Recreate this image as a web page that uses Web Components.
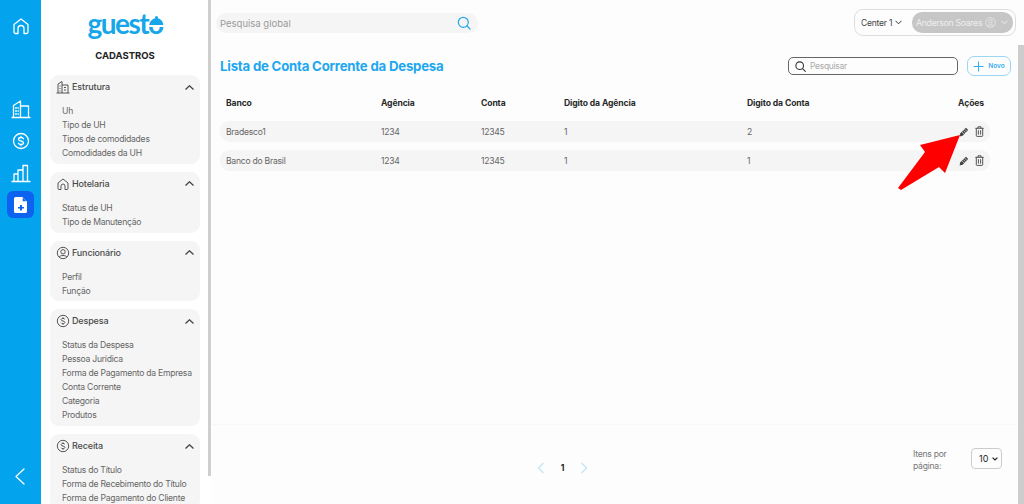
<!DOCTYPE html>
<html lang="pt-BR">
<head>
<meta charset="utf-8">
<title>Lista de Conta Corrente da Despesa</title>
<style>
  html, body { margin: 0; height: 100%; overflow: hidden; background: #fdfdfd; }
  body { font-family: Inter, "Open Sans", sans-serif; display: flex; }
</style>
</head>
<body>
<template id="tpl-rail">
  <style>
    :host { display: flex; flex-direction: column; align-items: center; width: 41px; height: 504px; background: #03a3ee; flex: none; }
    svg { display: block; fill: none; stroke: #fff; stroke-width: 1.3; stroke-linecap: round; stroke-linejoin: round; }
    .home { margin-top: 16px; }
    .b1 { margin-top: 63px; }
    .b2 { margin-top: 12px; }
    .b3 { margin-top: 12px; }
    .active { margin-top: 8px; width: 27px; height: 27px; border-radius: 6px; background: #0d62f0; display: flex; align-items: center; justify-content: center; }
    .back { margin-top: auto; margin-bottom: 19px; }
  </style>
  <svg class="home" width="20" height="20" viewBox="0 0 20 20"><path d="M3 8.500 10 3l7 5.500V16a1.500 1.500 0 0 1-1.500 1.500H13V12.500a3 3 0 0 0-6 0V17.500H4.500A1.500 1.500 0 0 1 3 16Z"/></svg>
  <svg class="b1" width="20" height="20" viewBox="0 0 20 20"><path d="M1 18.500h18M2.500 18.500V6.500L9.500 2v16.500M9.500 7h8v11.500M4.500 9h1M7 9h.5M4.500 12h1M7 12h.5M4.500 15h1M7 15h.5"/></svg>
  <svg class="b2" width="20" height="20" viewBox="0 0 20 20"><circle cx="10" cy="10" r="7.500"/><path d="M12.500 7.800c-.4-.9-1.300-1.300-2.500-1.300-1.500 0-2.500.7-2.500 1.700 0 2.400 5 1.200 5 3.600 0 1-1 1.700-2.500 1.700-1.300 0-2.200-.5-2.500-1.300M10 5.300v1.200M10 13.500v1.200"/></svg>
  <svg class="b3" width="20" height="20" viewBox="0 0 20 20"><path d="M1 18.500h18M3 18.500V11h4v7.500M7 18.500V7h5v11.500M12 18.500V2.500h4.500v16"/></svg>
  <div class="active">
    <svg width="16" height="18" viewBox="0 0 16 18" style="stroke:none"><path fill="#fff" d="M2.500 1H9.500L14 5.500V15.500A1.500 1.500 0 0 1 12.500 17H2.500A1.500 1.500 0 0 1 1 15.500V2.500A1.500 1.500 0 0 1 2.500 1Z"/><path fill="#0d62f0" d="M9.700 1.500 13.500 5.300H9.700ZM7 9h2v2h2v1.600H9v2H7v-2H5V11h2Z"/></svg>
  </div>
  <svg class="back" width="16" height="17" viewBox="0 0 16 17"><path d="M11 1 3 8.500l8 7.500"/></svg>
</template>

<template id="tpl-logo">
  <style>
    :host { display: block; text-align: center; }
    .wrap { position: relative; display: inline-block; height: 30px; font: 700 28px/30px Lato, Inter, sans-serif; color: #17a6ea; letter-spacing: -1.500px; }
    .cut { position: absolute; right: -2px; top: 17px; width: 17px; height: 1.500px; background: #fff; }
    .dot { position: absolute; right: 5px; top: 8px; width: 3px; height: 3px; border-radius: 50%; background: #17a6ea; }
    .fill { position: absolute; right: 0; top: 10px; width: 13px; height: 7px; border-radius: 7px 7px 0 0; background: #17a6ea; }
    h1 { margin: 11px 0 0; font: 700 9.500px/14px Inter, sans-serif; color: #222; }
  </style>
  <div class="wrap">guesto<span class="dot"></span><span class="fill"></span><span class="cut"></span></div>
  <h1>CADASTROS</h1>
</template>

<template id="tpl-menu-card">
  <style>
    :host { display: block; background: #f5f5f5; border-radius: 9px; padding: 4px 6px 3.800px 6px; margin-bottom: 8px; color: #555; }
    .head { display: flex; align-items: center; height: 16px; padding-bottom: 9px; }
    .ic { width: 14px; height: 14px; margin-right: 2px; display: flex; }
    .t { font: 500 9px/14px Inter, sans-serif; letter-spacing: -.15px; color: #4a4a4a; flex: 1; }
    .chev { width: 9px; height: 5px; fill: none; stroke: #444; stroke-width: 1.300; }
    .list { padding-left: 6px; font: 400 8.600px/14px Inter, sans-serif; letter-spacing: -.25px; color: #666; }
  </style>
  <div class="head"><span class="ic"><slot name="icon"></slot></span><span class="t"><slot name="title"></slot></span>
    <svg class="chev" viewBox="0 0 9 5"><path d="M.5 4.500 4.500.8l4 3.700"/></svg></div>
  <div class="list"><slot></slot></div>
</template>

<template id="tpl-topbar">
  <style>
    :host { display: flex; align-items: flex-start; justify-content: space-between; padding: 9px 8px 0 4px; height: 36px; }
    .search { margin-top: 4px; width: 262px; height: 20px; border-radius: 10px; background: #f5f5f5; display: flex; align-items: center; justify-content: space-between; padding: 0 7px 0 4px; box-sizing: border-box; font: 400 9.500px Inter, sans-serif; color: #9a9a9a; }
    .user { width: 162px; height: 27px; box-sizing: border-box; border: 1px solid #ddd; border-radius: 9px; display: flex; align-items: center; padding: 0 2px 0 6px; justify-content: space-between; font: 400 8.500px Inter, sans-serif; letter-spacing: -.2px; color: #444; }
    .pill { width: 101px; height: 21px; border-radius: 10px; background: #c6c6c6; color: #eee; display: flex; align-items: center; gap: 3px; padding-left: 4px; box-sizing: border-box; white-space: nowrap; font-size: 8.700px; letter-spacing: -.3px; }
    .c { display: flex; align-items: center; gap: 3px; }
  </style>
  <div class="search">Pesquisa global
    <svg width="14" height="14" viewBox="0 0 14 14" fill="none" stroke="#2aa7ea" stroke-width="1.200" stroke-linecap="round"><circle cx="6.300" cy="6.300" r="5"/><path d="m10 10 3 3"/></svg>
  </div>
  <div class="user">
    <span class="c">Center 1 <svg width="7" height="5" viewBox="0 0 7 5" fill="none" stroke="#333"><path d="m.5.8 3 3 3-3"/></svg></span>
    <span class="pill">Anderson Soares
      <svg width="11" height="11" viewBox="0 0 11 11" fill="none" stroke="#eee" stroke-width=".8"><circle cx="5.500" cy="5.500" r="4.800"/><circle cx="5.500" cy="4.500" r="1.700"/><path d="M2.500 9c.7-1.500 5.300-1.500 6 0"/></svg>
      <svg width="7" height="5" viewBox="0 0 7 5" fill="none" stroke="#eee" style="margin-left:2px"><path d="m.5.8 3 3 3-3"/></svg>
    </span>
  </div>
</template>

<template id="tpl-toolbar">
  <style>
    :host { display: flex; align-items: center; padding: 11px 13px 0 8px; height: 20px; }
    h2 { margin: 0; flex: 1; font: 700 13.200px/20px Inter, sans-serif; letter-spacing: -.2px; color: #1ea7f0; }
    .find { width: 170px; height: 18px; box-sizing: border-box; border: 1px solid #666; border-radius: 5px; display: flex; align-items: center; gap: 4px; padding-left: 6px; font: 400 8.500px Inter, sans-serif; letter-spacing: -.3px; color: #aaa; }
    .new { margin-left: 9px; width: 44px; height: 20px; box-sizing: border-box; border: 1px solid #9bd6f5; border-radius: 7px; display: flex; align-items: center; justify-content: center; gap: 4px; font: 600 6.500px Inter, sans-serif; color: #35aef0; }
  </style>
  <h2>Lista de Conta Corrente da Despesa</h2>
  <div class="find"><svg width="11" height="11" viewBox="0 0 11 11" fill="none" stroke="#333" stroke-width="1.100" stroke-linecap="round"><circle cx="4.700" cy="4.700" r="3.800"/><path d="m7.600 7.600 2.700 2.700"/></svg>Pesquisar</div>
  <div class="new"><svg width="11" height="11" viewBox="0 0 11 11" stroke="#35aef0" stroke-width="1"><path d="M5.500.5v10M.5 5.500h10"/></svg>Novo</div>
</template>

<template id="tpl-conta-table">
  <style>
    :host { display: block; padding: 17px 34px 0 8px; font-family: Inter, sans-serif; }
    .r { display: grid; grid-template-columns: 155px 100px 83px 183px 1fr 60px; padding: 0 6px; align-items: center; font-size: 8.600px; letter-spacing: -.25px; }
    .h { height: 20px; font-weight: 700; color: #2a2a2a; margin-bottom: 8px; letter-spacing: -.12px; }
    .h :last-child { text-align: right; }
    .b { height: 21px; margin-bottom: 8px; background: #f5f5f5; border-radius: 9px; color: #666; }
    .acts { display: flex; justify-content: flex-end; gap: 6px; align-items: center; }
    svg { display: block; }
  </style>
  <div class="r h"><div>Banco</div><div>Agência</div><div>Conta</div><div>Digito da Agência</div><div>Digito da Conta</div><div>Ações</div></div>
  <div class="r b"><div>Bradesco1</div><div>1234</div><div>12345</div><div>1</div><div>2</div><div class="acts" id="a1"></div></div>
  <div class="r b"><div>Banco do Brasil</div><div>1234</div><div>12345</div><div>1</div><div>1</div><div class="acts" id="a2"></div></div>
</template>

<template id="tpl-pager">
  <style>
    :host { display: block; margin: auto 6px 0 0; height: 79px; border-top: 1px solid #f8f8f8; font-family: Inter, sans-serif; }
    .box { display: grid; grid-template-columns: 1fr auto; height: 100%; }
    .pages { display: flex; align-items: center; justify-content: center; gap: 16px; font-size: 8.500px; font-weight: 700; color: #222; padding: 7px 0 0 0; }
    .size { display: flex; align-items: flex-start; padding: 23px 16px 0 0; }
    .lab { width: 58px; font-size: 8.600px; letter-spacing: -.25px; line-height: 12px; color: #777; }
    .sel { width: 31px; height: 21px; box-sizing: border-box; border: 1px solid #ccc; border-radius: 4px; display: flex; align-items: center; gap: 4px; padding-left: 7px; font-size: 9px; color: #222; }
  </style>
  <div class="box">
    <div class="pages">
      <svg width="8" height="12" viewBox="0 0 8 12" fill="none" stroke="#bfe6fa" stroke-width="1.300"><path d="M6.500 1 1.500 6l5 5"/></svg>
      1
      <svg width="8" height="12" viewBox="0 0 8 12" fill="none" stroke="#bfe6fa" stroke-width="1.300"><path d="m1.500 1 5 5-5 5"/></svg>
    </div>
    <div class="size"><div class="lab">Itens por página:</div>
      <div class="sel">10 <svg width="6" height="4" viewBox="0 0 6 4" fill="none" stroke="#222" stroke-width="1.200"><path d="m.6.600 2.400 2.400L5.400.6"/></svg></div></div>
  </div>
</template>

<template id="tpl-side">
  <style>
    :host { display: block; position: relative; width: 171px; height: 504px; overflow: hidden; flex: none; box-sizing: border-box; padding: 8px 12px 0 9px; background: #fff; }
    .bar { position: absolute; right: 1px; top: 0; width: 3px; height: 476px; background: #cfcfcf; }
  </style>
  <slot></slot><div class="bar"></div>
</template>

<template id="tpl-main">
  <style>
    :host { display: flex; flex-direction: column; flex: 1; position: relative; height: 504px; box-sizing: border-box; }
    .bar { position: absolute; right: 0; top: 45px; bottom: 0; width: 6px; background: #cdcdcd; }
    .arrow { position: absolute; left: 0; top: 0; pointer-events: none; }
  </style>
  <slot></slot><div class="bar"></div>
  <svg class="arrow" width="812" height="504" viewBox="212 0 812 504"><path fill="#fe0000" d="M960 135 920 145 925 152 898 188 901 190 939 167 945 173Z"/></svg>
</template>

<gs-rail></gs-rail>
<gs-side>
  <gs-logo style="margin-bottom:12px"></gs-logo>
  <gs-menu-card>
    <svg slot="icon" width="14" height="14" viewBox="0 0 14 14" fill="none" stroke="#444" stroke-width=".9"><path d="M.5 13h13M2 13V4l4-2.500V13M6 5h6v8M3.500 6h1M3.500 8.500h1M3.500 11h1M8 7.500h2M8 10h2"/></svg>
    <span slot="title">Estrutura</span>
    <gs-link>Uh</gs-link><gs-link>Tipo de UH</gs-link><gs-link>Tipos de comodidades</gs-link><gs-link>Comodidades da UH</gs-link>
  </gs-menu-card>
  <gs-menu-card>
    <svg slot="icon" width="14" height="14" viewBox="0 0 14 14" fill="none" stroke="#444" stroke-width=".9"><path d="M2 6 7 2l5 4v5.500a1 1 0 0 1-1 1H9V9a2 2 0 0 0-4 0v3.500H3a1 1 0 0 1-1-1Z"/></svg>
    <span slot="title">Hotelaria</span>
    <gs-link>Status de UH</gs-link><gs-link>Tipo de Manutenção</gs-link>
  </gs-menu-card>
  <gs-menu-card>
    <svg slot="icon" width="14" height="14" viewBox="0 0 14 14" fill="none" stroke="#444" stroke-width=".9"><circle cx="7" cy="7" r="5.700"/><circle cx="7" cy="5.800" r="2.200"/><path d="M3.200 11c.8-2 6.800-2 7.600 0"/></svg>
    <span slot="title">Funcionário</span>
    <gs-link>Perfil</gs-link><gs-link>Função</gs-link>
  </gs-menu-card>
  <gs-menu-card>
    <svg slot="icon" width="14" height="14" viewBox="0 0 14 14" fill="none" stroke="#444" stroke-width=".9"><circle cx="7" cy="7" r="5.700"/><path d="M8.800 5.300C8.500 4.700 7.800 4.400 7 4.400c-1.100 0-1.900.6-1.900 1.300 0 1.800 3.800.9 3.800 2.700 0 .7-.8 1.300-1.900 1.300-.9 0-1.600-.4-1.900-1M7 3.300v1M7 9.700v1"/></svg>
    <span slot="title">Despesa</span>
    <gs-link>Status da Despesa</gs-link><gs-link>Pessoa Jurídica</gs-link><gs-link>Forma de Pagamento da Empresa</gs-link><gs-link>Conta Corrente</gs-link><gs-link>Categoria</gs-link><gs-link>Produtos</gs-link>
  </gs-menu-card>
  <gs-menu-card>
    <svg slot="icon" width="14" height="14" viewBox="0 0 14 14" fill="none" stroke="#444" stroke-width=".9"><circle cx="7" cy="7" r="5.700"/><path d="M8.800 5.300C8.500 4.700 7.800 4.400 7 4.400c-1.100 0-1.900.6-1.900 1.300 0 1.800 3.800.9 3.800 2.700 0 .7-.8 1.300-1.900 1.300-.9 0-1.600-.4-1.900-1M7 3.300v1M7 9.700v1"/></svg>
    <span slot="title">Receita</span>
    <gs-link>Status do Título</gs-link><gs-link>Forma de Recebimento do Título</gs-link><gs-link>Forma de Pagamento do Cliente</gs-link>
  </gs-menu-card>
</gs-side>
<gs-main>
  <gs-topbar></gs-topbar>
  <gs-toolbar></gs-toolbar>
  <gs-conta-table></gs-conta-table>
  <gs-pager></gs-pager>
</gs-main>

<script>
  function fromTemplate(name, id, after) {
    customElements.define(name, class extends HTMLElement {
      constructor() {
        super();
        this.attachShadow({ mode: "open" });
        this.shadowRoot.appendChild(document.getElementById(id).content.cloneNode(true));
        if (after) after(this.shadowRoot);
      }
    });
  }

  const actions = `
    <svg width="10" height="10" viewBox="0 0 11 11"><path fill="#444" d="M7.600.9 10.100 3.400 4 9.500.6 10.400 1.500 7Z"/><path stroke="#f5f5f5" stroke-width=".7" d="M3.200 5.300 5.700 7.800M4.700 3.800l2.500 2.500M6.200 2.300l2.500 2.500"/></svg>
    <svg width="9" height="11" viewBox="0 0 9 11" fill="none" stroke="#444" stroke-width=".9"><path d="M.3 2.300h8.400M3 2.300V.8h3v1.500M1.300 2.300v7.300c0 .5.300.8.800.8h4.800c.5 0 .8-.3.8-.8V2.300M3.400 4.200v4.400M5.600 4.200v4.400"/></svg>`;

  fromTemplate("gs-rail", "tpl-rail");
  fromTemplate("gs-logo", "tpl-logo");
  fromTemplate("gs-menu-card", "tpl-menu-card");
  fromTemplate("gs-topbar", "tpl-topbar");
  fromTemplate("gs-toolbar", "tpl-toolbar");
  fromTemplate("gs-conta-table", "tpl-conta-table", (root) => {
    root.getElementById("a1").innerHTML = actions;
    root.getElementById("a2").innerHTML = actions;
  });
  fromTemplate("gs-pager", "tpl-pager");
  fromTemplate("gs-side", "tpl-side");
  fromTemplate("gs-main", "tpl-main");

  customElements.define("gs-link", class extends HTMLElement {
    constructor() {
      super();
      this.attachShadow({ mode: "open" });
      this.shadowRoot.innerHTML = `<style>:host { display: block; white-space: nowrap; }</style><slot></slot>`;
    }
  });
</script>
</body>
</html>
